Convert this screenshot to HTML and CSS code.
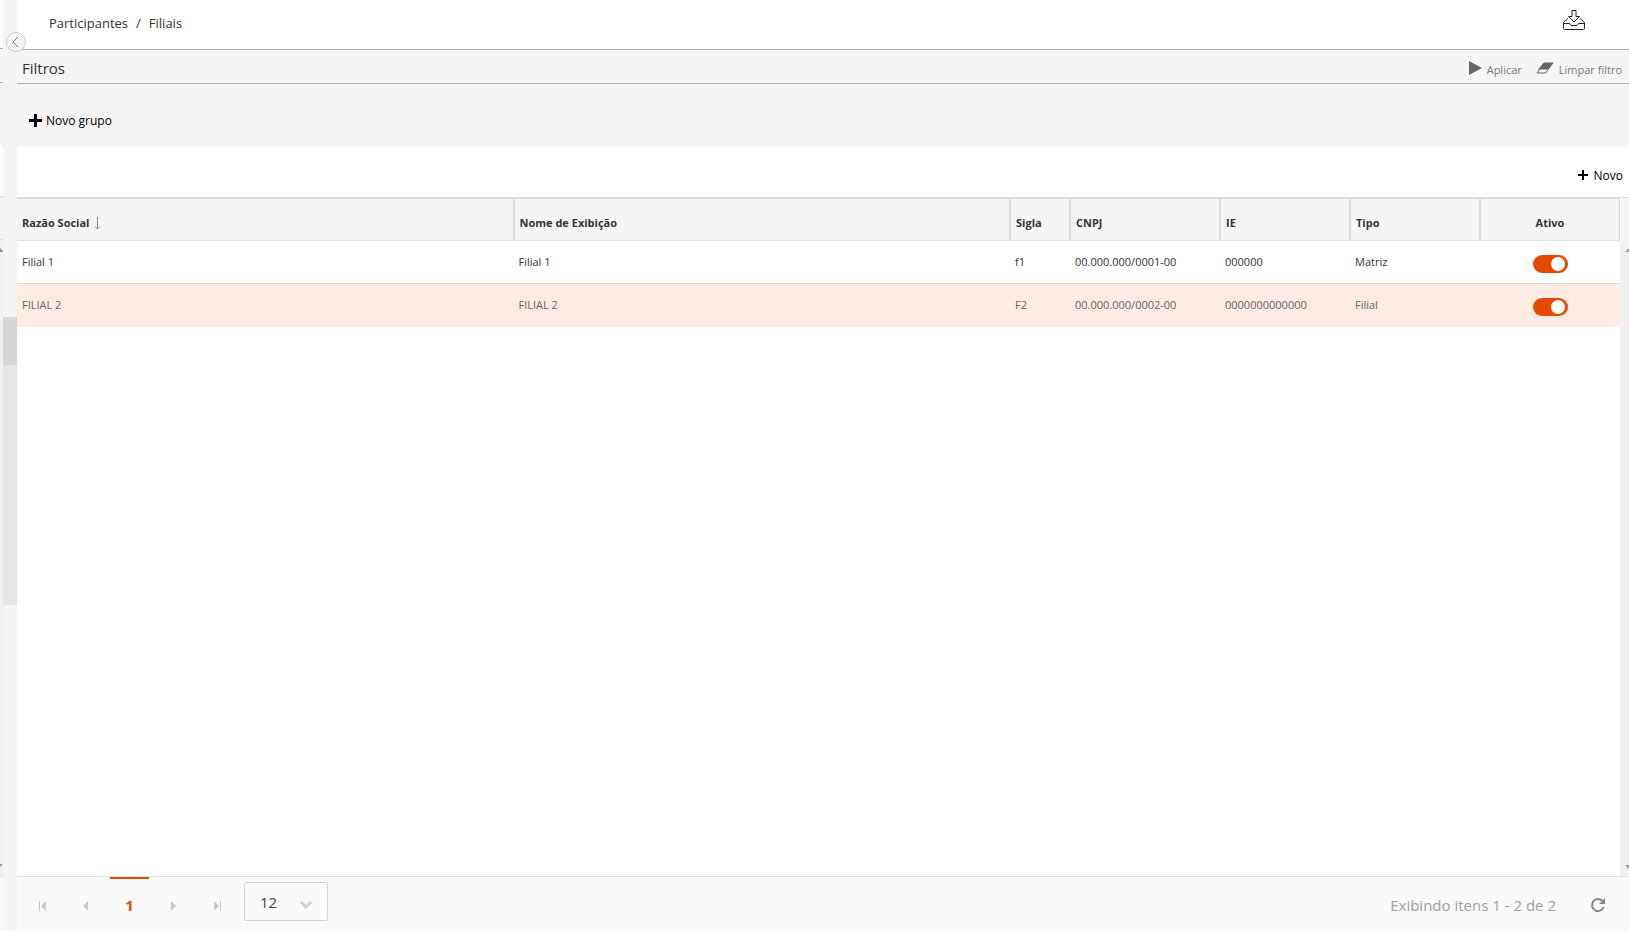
FILE: index.html
```
<!DOCTYPE html>
<html lang="pt-BR">
<head>
    <meta charset="UTF-8">
    <meta name="viewport" content="width=device-width, initial-scale=1.0">
    <title>Participantes / Filiais</title>
    <link rel="stylesheet" href="styles.css">
</head>
<body>
    <!-- edge of the collapsed menu pane -->
    <aside class="side">
        <div class="side-top"></div>
        <div class="side-title"></div>
        <div class="side-filter"></div>
        <div class="side-tools"></div>
        <div class="side-head"></div>
        <div class="side-scroll">
            <svg width="3" height="4" viewBox="0 0 3 4"><path d="M0 0L3 3V4H0z"/></svg>
            <svg width="3" height="4" viewBox="0 0 3 4"><path d="M0 0H3L0 3z"/></svg>
        </div>
        <div class="side-foot"></div>
    </aside>

    <div class="splitter">
        <button type="button" class="collapse" aria-label="Recolher">
            <svg width="18" height="18" viewBox="0 0 18 18"><path d="M11 4L6 9L11 14"/></svg>
        </button>
        <div class="grip">
            <div class="handle"></div>
        </div>
    </div>

    <main>
        <header class="topbar">
            <nav class="breadcrumb">
                <a href="#">Participantes</a>
                <span>/</span>
                <a href="#">Filiais</a>
            </nav>
            <button type="button" class="inbox" aria-label="Exportar">
                <svg width="24" height="22" viewBox="0 0 24 22"><path d="M10 1.500H14V7.500H17.500L12 13L6.500 7.500H10zM6 9.500L1.500 13.500V19.500Q1.500 20.500 2.500 20.500H21.500Q22.500 20.500 22.500 19.500V13.500L18 9.500M1.500 14.500H7.500L9 16.500H15L16.500 14.500H22.500"/></svg>
            </button>
        </header>

        <div class="filter-bar">
            <h2>Filtros</h2>
            <div class="filter-actions">
                <button type="button">
                    <svg width="13" height="14" viewBox="0 0 13 14"><path d="M0 0L13 7L0 14z" fill="currentColor"/></svg>
                    <span>Aplicar</span>
                </button>
                <button type="button" class="clear">
                    <svg width="18" height="12" viewBox="0 0 18 12"><path d="M7.500 1H17L11.500 7.500H2z" fill="currentColor"/><path d="M8 1H17L9.500 11H1z" fill="none" stroke="currentColor" stroke-linejoin="round"/></svg>
                    <span>Limpar filtro</span>
                </button>
            </div>
        </div>

        <div class="filter-body">
            <button type="button" class="new-group">
                <svg width="13" height="13" viewBox="0 0 13 13"><path d="M5 0H8V5H13V8H8V13H5V8H0V5H5z"/></svg>
                Novo grupo
            </button>
        </div>

        <div class="toolbar">
            <button type="button" class="new">
                <svg width="10" height="10" viewBox="0 0 10 10"><path d="M4 0H6V4H10V6H6V10H4V6H0V4H4z"/></svg>
                Novo
            </button>
        </div>

        <section class="grid">
            <div class="grid-content">
                <table>
                    <colgroup>
                        <col>
                        <col>
                        <col class="w-sigla">
                        <col class="w-cnpj">
                        <col class="w-ie">
                        <col class="w-tipo">
                        <col class="w-ativo">
                    </colgroup>
                    <thead>
                        <tr>
                            <th>Razão Social
                                <svg width="9" height="13" viewBox="0 0 9 13"><path d="M5.500 0V12M3 9.500L5.500 12L8 9.500"/></svg>
                            </th>
                            <th>Nome de Exibição</th>
                            <th>Sigla</th>
                            <th>CNPJ</th>
                            <th>IE</th>
                            <th>Tipo</th>
                            <th class="center">Ativo</th>
                        </tr>
                    </thead>
                    <tbody>
                        <tr>
                            <td>Filial 1</td>
                            <td>Filial 1</td>
                            <td>f1</td>
                            <td>00.000.000/0001-00</td>
                            <td>000000</td>
                            <td>Matriz</td>
                            <td class="center"><input type="checkbox" class="switch" aria-label="Ativo Filial 1" checked></td>
                        </tr>
                        <tr class="alt">
                            <td>FILIAL 2</td>
                            <td>FILIAL 2</td>
                            <td>F2</td>
                            <td>00.000.000/0002-00</td>
                            <td>0000000000000</td>
                            <td>Filial</td>
                            <td class="center"><input type="checkbox" class="switch" aria-label="Ativo FILIAL 2" checked></td>
                        </tr>
                    </tbody>
                </table>
            </div>
            <div class="scroll">
                <div class="scroll-head"></div>
                <div class="scroll-track">
                    <svg width="4" height="4" viewBox="0 0 4 4"><path d="M4 0V4H0z"/></svg>
                    <svg width="4" height="4" viewBox="0 0 4 4"><path d="M0 0H4V4z"/></svg>
                </div>
            </div>
        </section>

        <footer class="pager">
            <button type="button" aria-label="Primeira página"><svg width="8" height="10" viewBox="0 0 8 10"><path d="M1 0H2V10H1zM8 0V10L3 5z"/></svg></button>
            <button type="button" aria-label="Página anterior"><svg width="8" height="10" viewBox="0 0 8 10"><path d="M6 0V10L1 5z"/></svg></button>
            <button type="button" class="current">1</button>
            <button type="button" aria-label="Próxima página"><svg width="8" height="10" viewBox="0 0 8 10"><path d="M1 0V10L6 5z"/></svg></button>
            <button type="button" aria-label="Última página"><svg width="8" height="10" viewBox="0 0 8 10"><path d="M6 0H7V10H6zM0 0V10L5 5z"/></svg></button>
            <div class="page-size">
                <select aria-label="Itens por página">
                    <option>12</option>
                </select>
                <svg width="12" height="8" viewBox="0 0 12 8"><path d="M1 1L6 6L11 1"/></svg>
            </div>
            <span class="info">Exibindo itens 1 - 2 de 2</span>
            <button type="button" class="refresh" aria-label="Atualizar">
                <svg width="16" height="16" viewBox="0 0 16 16"><path d="M12.500 4A6 6 0 1 0 13.700 10" fill="none" stroke="currentColor" stroke-width="2"/><path d="M15 1V7H9z" fill="currentColor"/></svg>
            </button>
        </footer>
    </main>
</body>
</html>
```
FILE: styles.css
```
* {
    box-sizing: border-box;
}
body {
    margin: 0;
    height: 100vh;
    display: flex;
    overflow: hidden;
    background: #fff;
    color: #333;
    font-family: "Segoe UI", "Open Sans", "Noto Sans", sans-serif;
    font-size: 11px;
}
button {
    display: flex;
    align-items: center;
    padding: 0;
    border: none;
    background: none;
    color: inherit;
    font: inherit;
    cursor: pointer;
}
svg {
    display: block;
    flex: none;
}

/* left pane edge */
.side {
    width: 3px;
    display: flex;
    flex-direction: column;
}
.side-top {
    height: 49px;
    border-bottom: 1px solid #b0b0b0;
}
.side-title {
    height: 34px;
    background: #f5f5f5;
    border-bottom: 1px solid #b0b0b0;
}
.side-filter {
    height: 63px;
    background: #f5f5f5;
}
.side-tools {
    height: 51px;
    border-bottom: 1px solid #dcdcdc;
}
.side-head {
    height: 43px;
    background: #f5f5f5;
    border-bottom: 1px solid #e2e2e2;
}
.side-scroll {
    flex: 1;
    display: flex;
    flex-direction: column;
    justify-content: space-between;
    padding: 8px 0;
    background: #f0f0f0;
    fill: #999;
}
.side-foot {
    height: 55px;
    background: #fafafa;
    border-top: 1px solid #e2e2e2;
}

.splitter {
    position: relative;
    width: 14px;
    display: flex;
    flex-direction: column;
    justify-content: center;
    background: #f5f5f5;
}
.grip {
    height: 288px;
    margin-bottom: 9px;
    background: #e5e5e5;
}
.handle {
    height: 48px;
    background: #d6d6d6;
}
.collapse {
    position: absolute;
    top: 32px;
    left: 3px;
    z-index: 1;
    width: 20px;
    height: 20px;
    border: 1px solid #ccc;
    border-radius: 50%;
    background: #f5f5f5;
}
.collapse svg {
    fill: none;
    stroke: #777;
}

main {
    flex: 1;
    min-width: 0;
    display: flex;
    flex-direction: column;
}
.topbar {
    height: 50px;
    display: flex;
    align-items: center;
    justify-content: space-between;
    padding: 0 43px 4px 32px;
    border-bottom: 1px solid #b0b0b0;
}
.breadcrumb {
    display: flex;
    gap: 8px;
    font-size: 13px;
}
.breadcrumb a {
    color: #333;
    text-decoration: none;
}
.inbox {
    padding-bottom: 5px;
}
.inbox svg {
    fill: none;
    stroke: #222;
}
.filter-bar {
    height: 34px;
    display: flex;
    align-items: center;
    justify-content: space-between;
    padding: 2px 7px 0 5px;
    background: #f5f5f5;
    border-bottom: 1px solid #b0b0b0;
}
.filter-bar h2 {
    margin: 0;
    font-size: 15px;
    font-weight: 400;
}
.filter-actions {
    display: flex;
    gap: 14px;
    color: #666;
}
.filter-actions button {
    gap: 5px;
}
.filter-actions span {
    padding-top: 4px;
    color: #777;
}
.filter-body {
    height: 63px;
    display: flex;
    align-items: center;
    padding: 10px 12px 0;
    background: #f5f5f5;
    color: #000;
    font-size: 12px;
}
.new-group {
    gap: 4px;
}
.toolbar {
    height: 50px;
    display: flex;
    align-items: center;
    justify-content: flex-end;
    padding: 6px 6px 0;
    color: #000;
    font-size: 12px;
}
.new {
    gap: 6px;
}

/* data grid */
.grid {
    flex: 1;
    min-height: 0;
    display: flex;
}
.grid-content {
    flex: 1;
}
table {
    width: 100%;
    table-layout: fixed;
    border-collapse: separate;
    border-spacing: 0;
}
.w-sigla {
    width: 60px;
}
.w-cnpj {
    width: 150px;
}
.w-ie, .w-tipo {
    width: 130px;
}
.w-ativo {
    width: 140px;
}
th {
    height: 44px;
    padding: 6px 5px 0;
    background: #f5f5f5;
    border: 1px solid #dcdcdc;
    border-top-width: 2px;
    border-bottom-color: #e2e2e2;
    text-align: left;
    font-weight: 700;
}
th:first-child {
    border-left: none;
}
th svg {
    display: inline-block;
    vertical-align: middle;
    fill: none;
    stroke: #888;
}
td {
    height: 43px;
    padding: 0 5px 2px;
    border-bottom: 1px solid #dcdcdc;
}
.alt td {
    background: #fdebe4;
    border-bottom-color: #fdebe4;
    color: #666;
}
th.center, td.center {
    text-align: center;
}
td.center {
    padding: 3px 0 0;
}
.switch {
    appearance: none;
    display: block;
    width: 35px;
    height: 18px;
    margin: 0 auto;
    padding: 2px 3px;
    border-radius: 9px;
    background: #e64a00;
}
.switch::before {
    content: "";
    display: block;
    width: 14px;
    height: 14px;
    margin-left: auto;
    border-radius: 50%;
    background: #fff;
}
.scroll {
    width: 9px;
    display: flex;
    flex-direction: column;
}
.scroll-head {
    height: 44px;
    background: #f5f5f5;
    border-top: 1px solid #dcdcdc;
    border-left: 1px solid #fff;
}
.scroll-track {
    flex: 1;
    display: flex;
    flex-direction: column;
    align-items: flex-end;
    justify-content: space-between;
    padding: 7px 0;
    background: #f0f0f0;
    fill: #999;
}

/* pager */
.pager {
    height: 55px;
    display: flex;
    align-items: center;
    padding: 0 23px 0 5px;
    background: #fafafa;
    border-top: 1px solid #e2e2e2;
    color: #a0a0a0;
    font-size: 15px;
}
.pager button {
    width: 39px;
    height: 54px;
    margin-right: 5px;
    padding-top: 4px;
    justify-content: center;
    fill: #c8c8c8;
}
.pager .current {
    padding-top: 0;
    border-top: 2px solid #e64a00;
    color: #e64a00;
    font-weight: 700;
}
.page-size {
    position: relative;
    width: 84px;
    margin: 0 0 5px 2px;
}
.page-size select {
    appearance: none;
    width: 100%;
    height: 39px;
    padding: 0 15px;
    border: 1px solid #d5d5d5;
    border-radius: 2px;
    background: #fafafa;
    color: #444;
    font: inherit;
}
.page-size svg {
    position: absolute;
    top: 19px;
    right: 16px;
    fill: none;
    stroke: #d0d0d0;
    stroke-width: 3;
    pointer-events: none;
}
.info {
    margin-left: auto;
    padding-top: 2px;
}
.pager .refresh {
    width: 16px;
    margin: 0 0 0 34px;
    padding-top: 2px;
    color: #888;
}
```
